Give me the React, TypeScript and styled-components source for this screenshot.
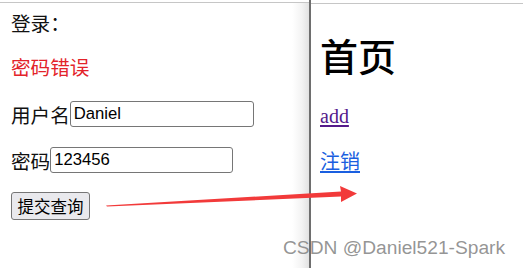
import React from "react";
import styled, { createGlobalStyle } from "styled-components";

const Global = createGlobalStyle`
  html, body { margin: 0; padding: 0; background: #fff; }
  body { width: 523px; height: 268px; overflow: hidden; }
  #root { width: 523px; height: 268px; }
`;

const Page = styled.div`
  position: relative;
  display: flex;
  width: 523px;
  height: 268px;
  overflow: hidden;
  background: #fff;
`;

const LeftPane = styled.div`
  width: 309px;
  height: 100%;
  box-sizing: border-box;
  border-top: 1px solid #c6c6c6;
  margin-top: 2px;
  padding: 10px 0 0 11px;
  display: flex;
  flex-direction: column;
  gap: 20px;
  background: linear-gradient(to right, #fff 0, #fff 292px, #f3f3f3 302px, #e2e2e2 309px);
  font-family: "Liberation Serif", "Noto Sans CJK SC", serif;
  font-size: 19.6px;
  color: #111;
`;

const Divider = styled.div`
  width: 2px;
  height: 100%;
  background: #6e6e6e;
`;

const RightPane = styled.div`
  flex: 1;
  height: 100%;
  box-sizing: border-box;
  border-top: 1px solid #c6c6c6;
  margin-top: 3px;
  padding-left: 9px;
  display: flex;
  flex-direction: column;
  font-family: "Liberation Serif", "Noto Sans CJK SC", serif;
  font-size: 20px;
`;

const Line = styled.div<{ $color?: string }>`
  height: 24px;
  line-height: 24px;
  color: ${(p) => p.$color || "#111"};
  white-space: nowrap;
`;

const Row = styled.div<{ $h?: number }>`
  display: flex;
  align-items: center;
  height: ${(p) => p.$h || 26}px;
  margin-top: ${(p) => (p.$h ? -1 : 0)}px;
  white-space: nowrap;
`;

const TextInput = styled.input<{ $w: number }>`
  box-sizing: border-box;
  width: ${(p) => p.$w}px;
  height: 26px;
  margin: 0;
  padding: 0 3px;
  border: 1px solid #767676;
  border-radius: 3px;
  background: #fff;
  font-family: "Liberation Sans", Arial, sans-serif;
  font-size: 16.67px;
  color: #000;
  outline: none;
`;

const SubmitButton = styled.button`
  box-sizing: border-box;
  width: 79px;
  height: 28px;
  padding: 0;
  border: 1px solid #767676;
  border-radius: 3px;
  background: #e9e9ed;
  font-family: "Noto Sans CJK SC", sans-serif;
  font-size: 16.5px;
  line-height: 26px;
  color: #000;
`;

const Title = styled.h1`
  margin: 28px 0 0 0;
  height: 46px;
  line-height: 46px;
  font-family: "Noto Sans CJK SC", serif;
  font-size: 38px;
  font-weight: 500;
  color: #000;
`;

const Link = styled.a<{ $color: string; $top: number }>`
  display: block;
  margin-top: ${(p) => p.$top}px;
  height: 24px;
  line-height: 24px;
  color: ${(p) => p.$color};
  text-decoration: underline;
  text-underline-offset: 2px;
  align-self: flex-start;
`;

const Arrow = styled.svg`
  position: absolute;
  left: 0;
  top: 0;
  pointer-events: none;
`;

const Watermark = styled.div`
  position: absolute;
  left: 283px;
  top: 237px;
  font-family: "Liberation Sans", Arial, sans-serif;
  font-size: 19.2px;
  line-height: 22px;
  color: rgba(130, 130, 130, 0.85);
  white-space: nowrap;
`;

export default function App() {
  return (
    <>
      <Global />
      <Page>
        <LeftPane>
          <Line>登录：</Line>
          <Line $color="#e3232a">密码错误</Line>
          <Row>
            用户名<TextInput $w={184} defaultValue="Daniel" />
          </Row>
          <Row>
            密码<TextInput $w={183} defaultValue="123456" />
          </Row>
          <Row $h={28}>
            <SubmitButton>提交查询</SubmitButton>
          </Row>
        </LeftPane>
        <Divider />
        <RightPane>
          <Title>首页</Title>
          <Link href="#" $color="#551a8b" $top={26}>add</Link>
          <Link href="#" $color="#1a5fe0" $top={22}>注销</Link>
        </RightPane>
        <Arrow width="523" height="268" viewBox="0 0 523 268">
          <polygon
            points="106,205.5 341,191.5 340,186 357,193.5 341,202 341,196.5 107,206.5"
            fill="#f23a3a"
          />
        </Arrow>
        <Watermark>CSDN @Daniel521-Spark</Watermark>
      </Page>
    </>
  );
}
